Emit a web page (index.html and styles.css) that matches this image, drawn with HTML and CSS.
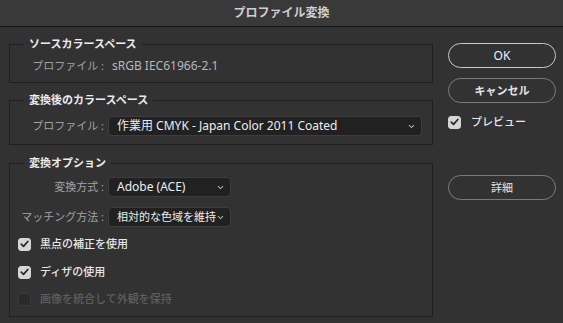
FILE: index.html
```html
<!DOCTYPE html>
<html lang="ja">
  <head>
    <meta charset="UTF-8" />
    <title>プロファイル変換</title>
    <link rel="stylesheet" href="styles.css">
  </head>
  <body>
    <div class="titlebar">プロファイル変換</div>

    <div class="dialog">
      <!-- 左側：設定グループ -->
      <div class="groups">
        <fieldset class="group group-source">
          <legend>ソースカラースペース</legend>
          <div class="row">
            <span class="label">プロファイル :</span>
            <span class="value">sRGB IEC61966-2.1</span>
          </div>
        </fieldset>

        <fieldset class="group group-dest">
          <legend>変換後のカラースペース</legend>
          <div class="row">
            <span class="label">プロファイル :</span>
            <div class="select select-wide">
              <span>作業用 CMYK - Japan Color 2011 Coated</span>
              <svg class="chevron" width="7" height="5" viewBox="0 0 7 5"><path d="M1 1.2 L3.5 3.6 L6 1.2" fill="none" stroke="#b0b0b0" stroke-width="1.1"/></svg>
            </div>
          </div>
        </fieldset>

        <fieldset class="group group-options">
          <legend>変換オプション</legend>
          <div class="row">
            <span class="label">変換方式 :</span>
            <div class="select">
              <span>Adobe (ACE)</span>
              <svg class="chevron" width="7" height="5" viewBox="0 0 7 5"><path d="M1 1.2 L3.5 3.6 L6 1.2" fill="none" stroke="#b0b0b0" stroke-width="1.1"/></svg>
            </div>
          </div>
          <div class="row row-second">
            <span class="label">マッチング方法 :</span>
            <div class="select select-ja">
              <span>相対的な色域を維持</span>
              <svg class="chevron" width="7" height="5" viewBox="0 0 7 5"><path d="M1 1.2 L3.5 3.6 L6 1.2" fill="none" stroke="#b0b0b0" stroke-width="1.1"/></svg>
            </div>
          </div>
          <div class="check check-1">
            <span class="box on"><svg width="9" height="8" viewBox="0 0 9 8"><path d="M1.3 4.2 L3.5 6.3 L7.8 1.5" fill="none" stroke="#2b2b2b" stroke-width="1.8" stroke-linecap="round" stroke-linejoin="round"/></svg></span>
            <span>黒点の補正を使用</span>
          </div>
          <div class="check check-2">
            <span class="box on"><svg width="9" height="8" viewBox="0 0 9 8"><path d="M1.3 4.2 L3.5 6.3 L7.8 1.5" fill="none" stroke="#2b2b2b" stroke-width="1.8" stroke-linecap="round" stroke-linejoin="round"/></svg></span>
            <span>ディザの使用</span>
          </div>
          <div class="check check-3 disabled">
            <span class="box"></span>
            <span>画像を統合して外観を保持</span>
          </div>
        </fieldset>
      </div>

      <!-- 右側：ボタン -->
      <div class="actions">
        <div class="button default">OK</div>
        <div class="button">キャンセル</div>
        <div class="check preview">
          <span class="box on"><svg width="9" height="8" viewBox="0 0 9 8"><path d="M1.3 4.2 L3.5 6.3 L7.8 1.5" fill="none" stroke="#2b2b2b" stroke-width="1.8" stroke-linecap="round" stroke-linejoin="round"/></svg></span>
          <span>プレビュー</span>
        </div>
        <div class="button details">詳細</div>
      </div>
    </div>
  </body>
</html>
```

FILE: styles.css
```css
body {
  margin: 0;
  width: 563px;
  height: 323px;
  overflow: hidden;
  background-color: #323232;
  font-family: "Noto Sans", "Noto Sans CJK JP", sans-serif;
  font-size: 11px;
  line-height: 16px;
  color: #e2e2e2;
}

/* タイトルバー */
.titlebar {
  height: 26px;
  line-height: 26px;
  background-color: #393939;
  border-bottom: 1px solid #151515;
  text-align: center;
  font-size: 12px;
  font-weight: bold;
  color: #cfcfcf;
}

.dialog {
  display: flex;
  gap: 15px;
  padding: 9px 0 0 9px;
}

.groups {
  width: 424px;
  display: flex;
  flex-direction: column;
}

/* グループ枠 */
.group {
  margin: 0;
  padding: 0 10px 0 0;
  border: 1px solid #1f1f1f;
}

.group legend {
  margin-left: 14px;
  padding: 0 5px;
  line-height: 16px;
  font-weight: bold;
  color: #ececec;
}

.group-source {
  padding-top: 6px;
  padding-bottom: 8px;
}

.group-dest {
  margin-top: 9px;
  padding-top: 8px;
  padding-bottom: 8px;
}

.group-options {
  margin-top: 10px;
  padding-top: 6px;
  padding-bottom: 9px;
}

.row {
  display: flex;
  align-items: center;
  gap: 4px;
  height: 16px;
}

.group-dest .row,
.group-options .row {
  height: 20px;
}

.row-second {
  margin-top: 10px;
}

.label {
  width: 94px;
  text-align: right;
  color: #a2a2a2;
  white-space: nowrap;
}

.value {
  margin-left: 4px;
  font-size: 12px;
  color: #b8b8b8;
}

/* ポップアップメニュー */
.select {
  position: relative;
  box-sizing: border-box;
  width: 123px;
  height: 20px;
  padding: 0 0 0 8px;
  display: flex;
  align-items: center;
  background-color: #212121;
  border: 1px solid #3d3d3d;
  border-radius: 4px;
  color: #ededed;
  font-size: 12px;
  white-space: nowrap;
  overflow: hidden;
}

.select-wide {
  width: 314px;
}

.select-ja {
  font-size: 11px;
}

.select .chevron {
  position: absolute;
  right: 6px;
  top: 7px;
}

/* チェックボックス */
.check {
  display: flex;
  align-items: center;
  gap: 9px;
  height: 16px;
  padding-left: 8px;
  color: #e6e6e6;
  font-weight: 500;
}

.check-1 {
  margin-top: 9px;
}

.check-2 {
  margin-top: 12px;
}

.check-3 {
  margin-top: 11px;
}

.box {
  box-sizing: border-box;
  width: 13px;
  height: 13px;
  border-radius: 3px;
  background-color: #2a2a2a;
  border: 1px solid #3a3a3a;
  display: flex;
  align-items: center;
  justify-content: center;
}

.box.on {
  background-color: #d6d6d6;
  border-color: #d6d6d6;
}

.disabled {
  color: #5e5e5e;
}

/* 右側ボタン */
.actions {
  width: 108px;
  padding-top: 7px;
  display: flex;
  flex-direction: column;
}

.button {
  box-sizing: border-box;
  height: 25px;
  line-height: 23px;
  border: 1px solid #7b7b7b;
  border-radius: 13px;
  text-align: center;
  font-weight: bold;
  color: #e4e4e4;
}

.button + .button {
  margin-top: 10px;
}

.button.default {
  border-color: #c8c8c8;
  font-size: 12px;
  font-weight: normal;
  color: #f0f0f0;
}

.preview {
  margin-top: 11px;
  padding-left: 0;
  gap: 10px;
}

.button.details {
  margin-top: 45px;
  font-weight: normal;
}
```
